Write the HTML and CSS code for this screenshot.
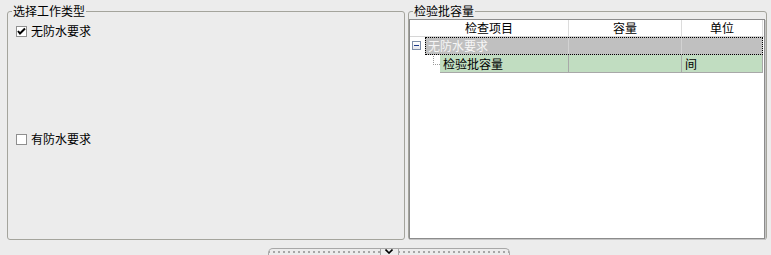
FILE: index.html
```html
<!DOCTYPE html>
<html lang="zh-cn">
<head>
    <meta charset="UTF-8">
    <title>检验批容量</title>
    <link rel="stylesheet" href="styles.css">
</head>
<body>
    <div class="panes">
        <fieldset class="group group-type">
            <legend>选择工作类型</legend>
            <div class="options">
                <label class="option">
                    <span class="box">
                        <svg width="9" height="9" viewBox="0 0 9 9"><path d="M1 4 L3 6.5 L8 1.5" fill="none" stroke="#000" stroke-width="2"/></svg>
                    </span>
                    无防水要求
                </label>
                <label class="option option-second">
                    <span class="box"></span>
                    有防水要求
                </label>
            </div>
        </fieldset>

        <fieldset class="group group-grid">
            <legend>检验批容量</legend>
            <div class="grid">
                <div class="grid-head">
                    <div class="col col-item">检查项目</div>
                    <div class="col col-cap">容量</div>
                    <div class="col col-unit">单位</div>
                </div>

                <div class="row">
                    <div class="tree tree-parent"><span class="expander"></span></div>
                    <div class="cells cells-selected">
                        <div class="cell cell-item">无防水要求</div>
                        <div class="cell cell-cap"></div>
                        <div class="cell cell-unit"></div>
                    </div>
                </div>

                <div class="row">
                    <div class="tree tree-child"><span class="branch"></span></div>
                    <div class="cells cells-child">
                        <div class="cell cell-item">检验批容量</div>
                        <div class="cell cell-cap"></div>
                        <div class="cell cell-unit">间</div>
                    </div>
                </div>
            </div>
        </fieldset>
    </div>

    <div class="splitter">
        <div class="handle">
            <span class="dots"></span>
            <span class="arrow">
                <svg width="8" height="5" viewBox="0 0 8 5"><path d="M0.5 0.5 L4 4 L7.5 0.5" fill="none" stroke="#000" stroke-width="1.6"/></svg>
            </span>
            <span class="dots"></span>
        </div>
    </div>
</body>
</html>
```

FILE: styles.css
```css
body {
    margin: 0;
    width: 771px;
    height: 255px;
    overflow: hidden;
    background-color: #ececec;
    font-family: "Noto Sans CJK SC", "DejaVu Sans", sans-serif;
    font-size: 12px;
    color: #000;
}

.panes {
    display: flex;
    gap: 3px;
    padding: 3px 0 0 7px;
}

.group {
    margin: 0;
    padding: 0;
    height: 237px;
    box-sizing: border-box;
    border: 1px solid #a4a49c;
    border-radius: 3px;
    min-width: 0;
}

.group legend {
    margin-left: 4px;
    padding: 0 1px;
    height: 16px;
    line-height: 16px;
}

.group-type {
    width: 398px;
}

.group-grid {
    width: 359px;
    padding-right: 1px;
}

/* 左侧选项 */
.options {
    display: flex;
    flex-direction: column;
    padding: 4px 0 0 8px;
}

.option {
    display: flex;
    align-items: center;
    gap: 4px;
    height: 16px;
    line-height: 16px;
}

.option-second {
    margin-top: 92px;
}

.box {
    width: 9px;
    height: 9px;
    border: 1px solid #8f8f8f;
    background-color: #fff;
    display: flex;
    align-items: center;
    justify-content: center;
}

/* 右侧表格 */
.grid {
    height: 220px;
    box-sizing: border-box;
    background-color: #fff;
    border: 1px solid #8c8c8c;
    box-shadow: 1px 1px 0 #c4c4c4;
}

.grid-head {
    display: flex;
    height: 16px;
    line-height: 16px;
    border-bottom: 1px solid #d6d6d6;
}

.col {
    text-align: center;
    border-right: 1px solid #dcdcdc;
    box-sizing: border-box;
}

.col-item { width: 159px; }
.col-cap { width: 113px; }
.col-unit { width: 81px; }

.row {
    display: flex;
    height: 18px;
}

.tree {
    position: relative;
    flex-shrink: 0;
}

.tree-parent {
    width: 15px;
}

.tree-child {
    width: 30px;
}

.expander {
    position: absolute;
    left: 2px;
    top: 4px;
    width: 7px;
    height: 7px;
    border: 1px solid #7f8fa8;
    background: linear-gradient(#fff, #e4e6ec);
}

.expander::after {
    content: "";
    position: absolute;
    left: 1px;
    top: 3px;
    width: 5px;
    height: 1px;
    background-color: #1c3a8a;
}

.branch {
    position: absolute;
    left: 23px;
    top: 1px;
    width: 6px;
    height: 8px;
    border-left: 1px dotted #9a9a9a;
    border-bottom: 1px dotted #9a9a9a;
}

.cells {
    display: flex;
    box-sizing: border-box;
    height: 18px;
    line-height: 16px;
}

.cells-selected {
    background-color: #c0c0c0;
    color: #f6f6f6;
    outline: 1px dotted #000;
    outline-offset: -1px;
}

.cells-child {
    background-color: #c1ddc1;
    border-bottom: 1px solid #a8a8a8;
}

.cell {
    box-sizing: border-box;
    padding: 1px 3px 0;
    border-right: 1px solid #a8a8a8;
}

.cells-selected .cell {
    border-right-color: #d2d2d2;
}

.cells-selected .cell-item { width: 144px; }
.cells-child .cell-item { width: 129px; }
.cell-cap { width: 113px; }
.cell-unit { width: 81px; }

/* 底部分隔条 */
.splitter {
    display: flex;
    padding: 8px 0 0 268px;
}

.handle {
    display: flex;
    width: 242px;
    height: 10px;
    box-sizing: border-box;
    border: 1px solid #a8a8a8;
    border-bottom: none;
    border-radius: 5px 5px 0 0;
}

.dots {
    flex: 1;
    background-image: linear-gradient(90deg, #a6a6a6 2px, transparent 2px);
    background-size: 5px 2px;
    background-repeat: repeat-x;
    background-position: 4px 2px;
}

.arrow {
    width: 17px;
    border-left: 1px solid #a8a8a8;
    border-right: 1px solid #a8a8a8;
    display: flex;
    justify-content: center;
    padding-top: 0;
}
```
